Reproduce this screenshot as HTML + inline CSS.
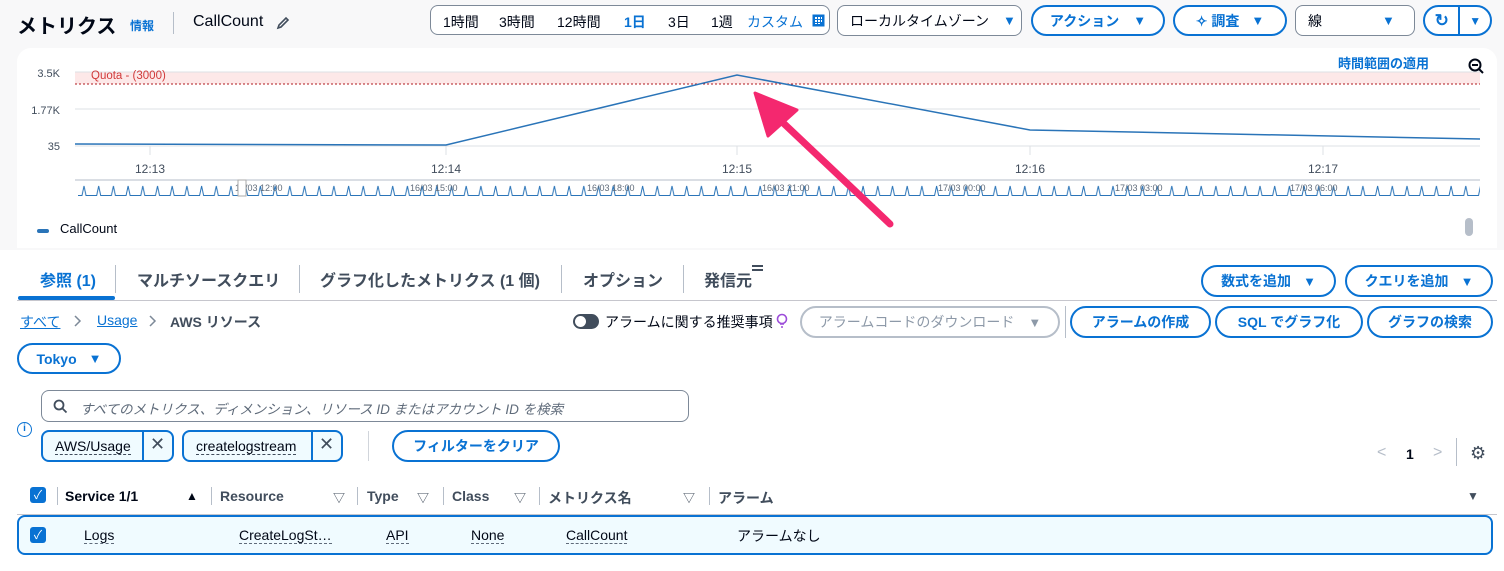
<!DOCTYPE html>
<html><head><meta charset="utf-8"><style>
*{box-sizing:border-box;margin:0;padding:0}
body{width:1504px;height:571px;overflow:hidden;background:#fff;font-family:"Liberation Sans","Noto Sans CJK JP",sans-serif;color:#000716;position:relative}
.a{position:absolute;white-space:nowrap}
.btn{position:absolute;border:2px solid #0972d3;border-radius:20px;color:#0972d3;font-weight:bold;font-size:14px;display:flex;align-items:center;justify-content:center;background:#fff}
.sel{position:absolute;border:1px solid #7d8998;border-radius:8px;font-size:14px;display:flex;align-items:center;padding-left:12px;background:#fff}
.tri{font-size:13px;margin-left:8px}
.lnk{color:#0972d3;text-decoration:underline}
.hd{position:absolute;top:488px;font-size:14px;font-weight:bold;color:#414d5c}
.cell{position:absolute;top:527px;font-size:14px;border-bottom:1px dashed #5f6b7a;line-height:16px}
.sep{position:absolute;width:1px;background:#b6bec9}
</style></head><body>
<div class="a" style="left:0;top:0;width:1504px;height:250px;background:#f8f8f9"></div>
<div class="a" style="left:17px;top:48px;width:1480px;height:200px;background:#fff;border-radius:14px 14px 0 0"></div>

<div class="a" style="left:17px;top:10px;font-size:20px;font-weight:bold">メトリクス</div>
<div class="a lnk" style="left:130px;top:17px;font-size:12px;font-weight:bold;text-decoration:none">情報</div>
<div class="sep" style="left:173px;top:12px;height:22px"></div>
<div class="a" style="left:193px;top:13px;font-size:16px">CallCount</div>
<svg class="a" style="left:276px;top:16px" width="14" height="14" viewBox="0 0 14 14"><path d="M2 12 L3 9 L10 2 L12 4 L5 11 Z" fill="none" stroke="#414d5c" stroke-width="1.6"/></svg>

<div class="a" style="left:430px;top:5px;width:400px;height:30px;border:1px solid #7d8998;border-radius:8px;background:#fff;font-size:14px">
<span class="a" style="left:12px;top:6px">1時間</span><span class="a" style="left:68px;top:6px">3時間</span><span class="a" style="left:126px;top:6px">12時間</span><span class="a" style="left:193px;top:6px;color:#0972d3;font-weight:bold">1日</span><span class="a" style="left:237px;top:6px">3日</span><span class="a" style="left:280px;top:6px">1週</span><span class="a" style="left:316px;top:6px;color:#0972d3">カスタム</span>
<svg class="a" style="left:381px;top:8px" width="13" height="13"><rect x="0.5" y="0.5" width="12" height="12" fill="#0972d3"/><path d="M3 3h2v2H3zM6 3h2v2H6zM9 3h1v2H9zM3 6h2v2H3zM6 6h2v2H6zM9 6h1v2H9zM3 9h2v1H3zM6 9h2v1H6z" fill="#fff"/></svg></div>

<div class="sel" style="left:837px;top:5px;width:185px;height:31px">ローカルタイムゾーン<span class="tri" style="color:#0972d3;margin-left:14px">▼</span></div>
<div class="btn" style="left:1031px;top:5px;width:134px;height:31px">アクション<span class="tri" style="margin-left:14px">▼</span></div>
<div class="btn" style="left:1173px;top:5px;width:114px;height:31px">✧ 調査<span class="tri" style="margin-left:12px">▼</span></div>
<div class="sel" style="left:1295px;top:5px;width:120px;height:31px">線<span class="tri" style="color:#0972d3;margin-left:60px">▼</span></div>
<div class="btn" style="left:1423px;top:5px;width:69px;height:31px;justify-content:flex-start"><span style="width:34px;text-align:center;font-size:17px">↻</span><span style="width:2px;height:27px;background:#0972d3"></span><span style="width:30px;text-align:center;font-size:12px">▼</span></div>

<div class="a lnk" style="left:1338px;top:53px;font-size:13px;font-weight:bold;text-decoration:none">時間範囲の適用</div>
<svg class="a" style="left:1468px;top:58px" width="16" height="16"><circle cx="7" cy="7" r="5.5" fill="none" stroke="#000716" stroke-width="2"/><path d="M4 7h6M11 11l4 4" stroke="#000716" stroke-width="2"/></svg>

<svg class="a" style="left:0;top:0" width="1504" height="250">
<g font-family="Liberation Sans, sans-serif" font-size="11" fill="#414d5c" text-anchor="end">
<text x="60" y="77">3.5K</text><text x="60" y="114">1.77K</text><text x="60" y="150">35</text></g>
<rect x="75" y="72" width="1405" height="12" fill="#fde8e8"/>
<line x1="75" y1="72" x2="1480" y2="72" stroke="#dde0e4"/>
<line x1="75" y1="109" x2="1480" y2="109" stroke="#dde0e4"/>
<line x1="75" y1="146" x2="1480" y2="146" stroke="#dde0e4"/>
<line x1="75" y1="84" x2="1480" y2="84" stroke="#b0181e" stroke-dasharray="2,2"/>
<text x="91" y="79" font-family="Liberation Sans, sans-serif" font-size="11.5" fill="#d13a3a">Quota - (3000)</text>
<polyline points="75,144 446,145 737,75 1030,130 1480,139" fill="none" stroke="#2a74b8" stroke-width="1.5"/>
<g stroke="#dde0e4"><line x1="150" y1="146" x2="150" y2="155"/><line x1="446" y1="146" x2="446" y2="155"/><line x1="737" y1="146" x2="737" y2="155"/><line x1="1030" y1="146" x2="1030" y2="155"/><line x1="1323" y1="146" x2="1323" y2="155"/></g>
<g font-family="Liberation Sans, sans-serif" font-size="12" fill="#414d5c" text-anchor="middle">
<text x="150" y="173">12:13</text><text x="446" y="173">12:14</text><text x="737" y="173">12:15</text><text x="1030" y="173">12:16</text><text x="1323" y="173">12:17</text></g>
<line x1="75" y1="180" x2="1480" y2="180" stroke="#b6bec9"/>
<defs><pattern id="sp" x="78" y="180" width="14.7" height="16" patternUnits="userSpaceOnUse"><path d="M0 15.5 L4 15.5 L6 6 L8 15.5 L14.7 15.5" fill="none" stroke="#2a74b8" stroke-width="1"/></pattern></defs>
<rect x="78" y="180" width="1402" height="16" fill="url(#sp)"/>
<g font-family="Liberation Sans, sans-serif" font-size="9" fill="#5f6b7a">
<text x="235" y="191">16/03 12:00</text><text x="410" y="191">16/03 15:00</text><text x="587" y="191">16/03 18:00</text><text x="762" y="191">16/03 21:00</text><text x="938" y="191">17/03 00:00</text><text x="1115" y="191">17/03 03:00</text><text x="1290" y="191">17/03 06:00</text></g>
<rect x="238" y="180" width="8" height="16" fill="#fff" stroke="#aaa"/>
<rect x="37" y="229" width="12" height="4" rx="2" fill="#2a74b8"/>
<text x="60" y="233" font-family="Liberation Sans, sans-serif" font-size="13" fill="#000716">CallCount</text>
<rect x="1465" y="218" width="8" height="18" rx="4" fill="#b6bec9"/>
<line x1="890" y1="224" x2="778" y2="118" stroke="#f4286f" stroke-width="7" stroke-linecap="round"/>
<polygon points="755,93 797,110 768,136" fill="#f4286f" stroke="#f4286f" stroke-width="3" stroke-linejoin="round"/>
</svg>

<div class="a" style="left:40px;top:267px;font-size:16px;font-weight:bold;color:#0972d3">参照 (1)</div>
<div class="a" style="left:18px;top:296px;width:97px;height:4px;background:#0972d3;border-radius:2px"></div>
<div class="sep" style="left:115px;top:265px;height:28px"></div>
<div class="a" style="left:137px;top:267px;font-size:16px;font-weight:bold;color:#414d5c">マルチソースクエリ</div>
<div class="sep" style="left:299px;top:265px;height:28px"></div>
<div class="a" style="left:320px;top:267px;font-size:16px;font-weight:bold;color:#414d5c">グラフ化したメトリクス (1 個)</div>
<div class="sep" style="left:561px;top:265px;height:28px"></div>
<div class="a" style="left:583px;top:267px;font-size:16px;font-weight:bold;color:#414d5c">オプション</div>
<div class="sep" style="left:683px;top:265px;height:28px"></div>
<div class="a" style="left:704px;top:267px;font-size:16px;font-weight:bold;color:#414d5c">発信元</div>
<div class="a" style="left:752px;top:265px;width:11px;height:2px;background:#414d5c;box-shadow:0 4px 0 #414d5c"></div>
<div class="a" style="left:17px;top:300px;width:1480px;height:1px;background:#c6c6cd"></div>
<div class="btn" style="left:1201px;top:265px;width:135px;height:32px">数式を追加<span class="tri" style="margin-left:12px">▼</span></div>
<div class="btn" style="left:1345px;top:265px;width:148px;height:32px">クエリを追加<span class="tri" style="margin-left:12px">▼</span></div>

<div class="a lnk" style="left:20px;top:312px;font-size:14px">すべて</div>
<svg class="a" style="left:74px;top:315px" width="8" height="12"><path d="M1 1l5 5-5 5" fill="none" stroke="#7d8998" stroke-width="1.5"/></svg>
<div class="a lnk" style="left:97px;top:312px;font-size:14px">Usage</div>
<svg class="a" style="left:149px;top:315px" width="8" height="12"><path d="M1 1l5 5-5 5" fill="none" stroke="#7d8998" stroke-width="1.5"/></svg>
<div class="a" style="left:170px;top:312px;font-size:14px;font-weight:bold;color:#414d5c">AWS リソース</div>

<div class="a" style="left:573px;top:314px;width:26px;height:15px;border-radius:8px;background:#414d5c"><div style="position:absolute;left:2px;top:2px;width:11px;height:11px;border-radius:50%;background:#fff"></div></div>
<div class="a" style="left:605px;top:312px;font-size:14px">アラームに関する推奨事項</div>
<svg class="a" style="left:776px;top:313px" width="12" height="16"><circle cx="6" cy="6" r="4.5" fill="none" stroke="#9c4cd9" stroke-width="1.6"/><path d="M4 11h4M5 14h2" stroke="#9c4cd9" stroke-width="1.6"/></svg>
<div class="a" style="left:800px;top:306px;width:260px;height:32px;border:2px solid #b6bec9;border-radius:20px;color:#8d99a8;font-size:14px;display:flex;align-items:center;justify-content:center">アラームコードのダウンロード<span class="tri" style="margin-left:14px">▼</span></div>
<div class="sep" style="left:1065px;top:306px;height:32px"></div>
<div class="btn" style="left:1070px;top:306px;width:141px;height:32px">アラームの作成</div>
<div class="btn" style="left:1215px;top:306px;width:148px;height:32px">SQL でグラフ化</div>
<div class="btn" style="left:1367px;top:306px;width:126px;height:32px">グラフの検索</div>

<div class="btn" style="left:17px;top:343px;width:104px;height:31px">Tokyo<span class="tri" style="margin-left:12px">▼</span></div>

<div class="a" style="left:41px;top:390px;width:648px;height:32px;border:1px solid #7d8998;border-radius:8px;background:#fff"></div>
<svg class="a" style="left:53px;top:399px" width="15" height="15"><circle cx="6" cy="6" r="4.5" fill="none" stroke="#414d5c" stroke-width="1.8"/><path d="M9.5 9.5l4 4" stroke="#414d5c" stroke-width="1.8"/></svg>
<div class="a" style="left:80px;top:398px;font-size:13.5px;color:#5f6b7a;font-style:italic">すべてのメトリクス、ディメンション、リソース ID またはアカウント ID を検索</div>
<div class="a" style="left:17px;top:422px;width:15px;height:15px;border:1.5px solid #0972d3;border-radius:50%;color:#0972d3;font-size:10px;font-weight:bold;text-align:center;line-height:12px">i</div>

<div class="a" style="left:41px;top:430px;width:133px;height:32px;border:2px solid #0972d3;border-radius:8px;background:#f0fbff"></div>
<div class="a" style="left:55px;top:438px;font-size:14px;border-bottom:1px dashed #414d5c;line-height:16px">AWS/Usage</div>
<div class="a" style="left:142px;top:431px;width:2px;height:30px;background:#0972d3"></div>
<div class="a" style="left:150px;top:434px;font-size:18px;color:#414d5c">✕</div>
<div class="a" style="left:182px;top:430px;width:161px;height:32px;border:2px solid #0972d3;border-radius:8px;background:#f0fbff"></div>
<div class="a" style="left:196px;top:438px;font-size:14px;border-bottom:1px dashed #414d5c;line-height:16px">createlogstream</div>
<div class="a" style="left:311px;top:431px;width:2px;height:30px;background:#0972d3"></div>
<div class="a" style="left:319px;top:434px;font-size:18px;color:#414d5c">✕</div>
<div class="sep" style="left:368px;top:431px;height:30px;background:#d1d5db"></div>
<div class="btn" style="left:392px;top:430px;width:168px;height:32px">フィルターをクリア</div>

<div class="a" style="left:1377px;top:444px;font-size:16px;color:#b6bec9">&lt;</div>
<div class="a" style="left:1406px;top:446px;font-size:14px;font-weight:bold">1</div>
<div class="a" style="left:1433px;top:444px;font-size:16px;color:#b6bec9">&gt;</div>
<div class="sep" style="left:1456px;top:438px;height:28px"></div>
<div class="a" style="left:1470px;top:443px;font-size:18px;color:#414d5c">⚙</div>

<div class="a" style="left:30px;top:487px;width:16px;height:16px;border-radius:3px;background:#0972d3;color:#fff;font-size:12px;text-align:center;line-height:16px">✓</div>
<div class="sep" style="left:57px;top:487px;height:18px"></div>
<div class="hd" style="left:65px;color:#000716">Service 1/1</div>
<div class="a" style="left:186px;top:489px;font-size:12px">▲</div>
<div class="sep" style="left:211px;top:487px;height:18px"></div>
<div class="hd" style="left:220px">Resource</div>
<div class="a" style="left:333px;top:489px;font-size:12px;color:#414d5c">▽</div>
<div class="sep" style="left:357px;top:487px;height:18px"></div>
<div class="hd" style="left:367px">Type</div>
<div class="a" style="left:417px;top:489px;font-size:12px;color:#414d5c">▽</div>
<div class="sep" style="left:443px;top:487px;height:18px"></div>
<div class="hd" style="left:452px">Class</div>
<div class="a" style="left:514px;top:489px;font-size:12px;color:#414d5c">▽</div>
<div class="sep" style="left:539px;top:487px;height:18px"></div>
<div class="hd" style="left:548px">メトリクス名</div>
<div class="a" style="left:683px;top:489px;font-size:12px;color:#414d5c">▽</div>
<div class="sep" style="left:709px;top:487px;height:18px"></div>
<div class="hd" style="left:718px">アラーム</div>
<div class="a" style="left:1467px;top:489px;font-size:12px;color:#414d5c">▼</div>
<div class="a" style="left:17px;top:514px;width:1480px;height:1px;background:#c6c6cd"></div>

<div class="a" style="left:17px;top:515px;width:1476px;height:40px;border:2px solid #0972d3;border-radius:8px;background:#f0fbff"></div>
<div class="a" style="left:30px;top:527px;width:16px;height:16px;border-radius:3px;background:#0972d3;color:#fff;font-size:12px;text-align:center;line-height:16px">✓</div>
<div class="cell" style="left:84px">Logs</div>
<div class="cell" style="left:239px">CreateLogSt…</div>
<div class="cell" style="left:386px">API</div>
<div class="cell" style="left:471px">None</div>
<div class="cell" style="left:566px">CallCount</div>
<div class="a" style="left:737px;top:526px;font-size:14px">アラームなし</div>
</body></html>
